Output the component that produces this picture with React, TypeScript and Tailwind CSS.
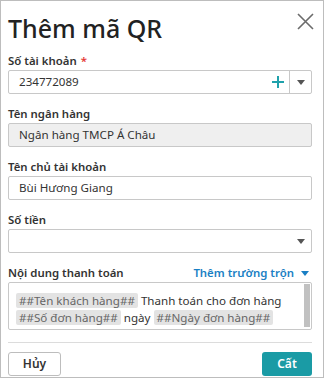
import React from "react";

type FieldProps = {
    label: string;
    required?: boolean;
    children: React.ReactNode;
    right?: React.ReactNode;
};

const Field: React.FC<FieldProps> = ({ label, required, children, right }) => {
    return (
        <div className="flex flex-col">
            <div className="flex items-center justify-between h-4 mb-px">
                <span className="text-[11.4px] font-semibold text-[#333] leading-4">
                    {label}
                    {required && <span className="text-[#e53935] ml-1">*</span>}
                </span>
                {right}
            </div>
            {children}
        </div>
    );
};

const Caret = ({ color = "#555" }: { color?: string }) => (
    <svg width="8" height="5" viewBox="0 0 8 5">
        <path d="M0 0 H8 L4 5 Z" fill={color} />
    </svg>
);

const Chip = ({ text }: { text: string }) => (
    <span className="bg-[#e3e3e3] text-[#666] px-[3px] rounded-[2px]">{text}</span>
);

export default function App() {
    return (
        <div
            className="w-[324px] h-[378px] bg-white border border-[#bdbdbd] flex flex-col pl-[7px] pr-[11px] text-[#333]"
            style={{ fontFamily: '"Noto Sans", "Open Sans", sans-serif' }}
        >
            <div className="flex items-start justify-between pt-[11px] h-[52px]">
                <h1 className="text-[25px] leading-8 font-medium text-[#222]">Thêm mã QR</h1>
                <button className="mt-px mr-[-2px] text-[#666]">
                    <svg width="17" height="17" viewBox="0 0 17 17">
                        <path d="M1 1 L16 16 M16 1 L1 16" stroke="#6b6b6b" strokeWidth="1.6" />
                    </svg>
                </button>
            </div>

            <div className="flex flex-col gap-3">
                <Field label="Số tài khoản" required>
                    <div className="h-6 flex items-center border border-[#c8c8c8] rounded-[2px]">
                        <span className="flex-1 pl-[10px] text-[11.6px]">234772089</span>
                        <svg width="12" height="12" viewBox="0 0 12 12" className="mr-[5px]">
                            <path d="M6 0 V12 M0 6 H12" stroke="#1fa1ab" strokeWidth="2" />
                        </svg>
                        <div className="w-[22px] h-full border-l border-[#c8c8c8] flex items-center justify-center">
                            <Caret />
                        </div>
                    </div>
                </Field>

                <Field label="Tên ngân hàng">
                    <div className="h-6 flex items-center border border-[#c8c8c8] bg-[#efefef] rounded-[2px] pl-[10px] text-[11.6px]">
                        Ngân hàng TMCP Á Châu
                    </div>
                </Field>

                <Field label="Tên chủ tài khoản">
                    <div className="h-6 flex items-center border border-[#c8c8c8] rounded-[2px] pl-[10px] text-[11.6px]">
                        Bùi Hương Giang
                    </div>
                </Field>

                <Field label="Số tiền">
                    <div className="h-6 flex items-center justify-end border border-[#c8c8c8] rounded-[2px] pr-[6px]">
                        <Caret />
                    </div>
                </Field>

                <Field
                    label="Nội dung thanh toán"
                    right={
                        <span className="flex items-center gap-[7px] text-[11.4px] font-semibold text-[#1a7fc4] leading-4 mr-[3px]">
                            Thêm trường trộn
                            <Caret color="#1a7fc4" />
                        </span>
                    }
                >
                    <div className="h-[48px] flex border border-[#c8c8c8] rounded-[2px]">
                        <div className="flex-1 pl-[7px] pt-[9px] text-[11.6px] leading-[17px] text-[#333]">
                            <Chip text="##Tên khách hàng##" /> Thanh toán cho đơn hàng{" "}
                            <Chip text="##Số đơn hàng##" /> ngày <Chip text="##Ngày đơn hàng##" />
                        </div>
                        <div className="w-[6px] mr-px mt-px h-[43px] bg-[#c1c1c1]" />
                    </div>
                </Field>
            </div>

            <div className="mt-[12px] border-t border-[#dcdcdc]" />

            <div className="flex items-center justify-between mt-[9px]">
                <button className="w-[53px] h-6 border border-[#bdbdbd] rounded-[3px] text-[12px] font-semibold text-[#333] bg-white">
                    Hủy
                </button>
                <button className="w-[50px] h-6 rounded-[3px] text-[12px] font-semibold text-white bg-[#1a9ba5]">
                    Cất
                </button>
            </div>
        </div>
    );
}
